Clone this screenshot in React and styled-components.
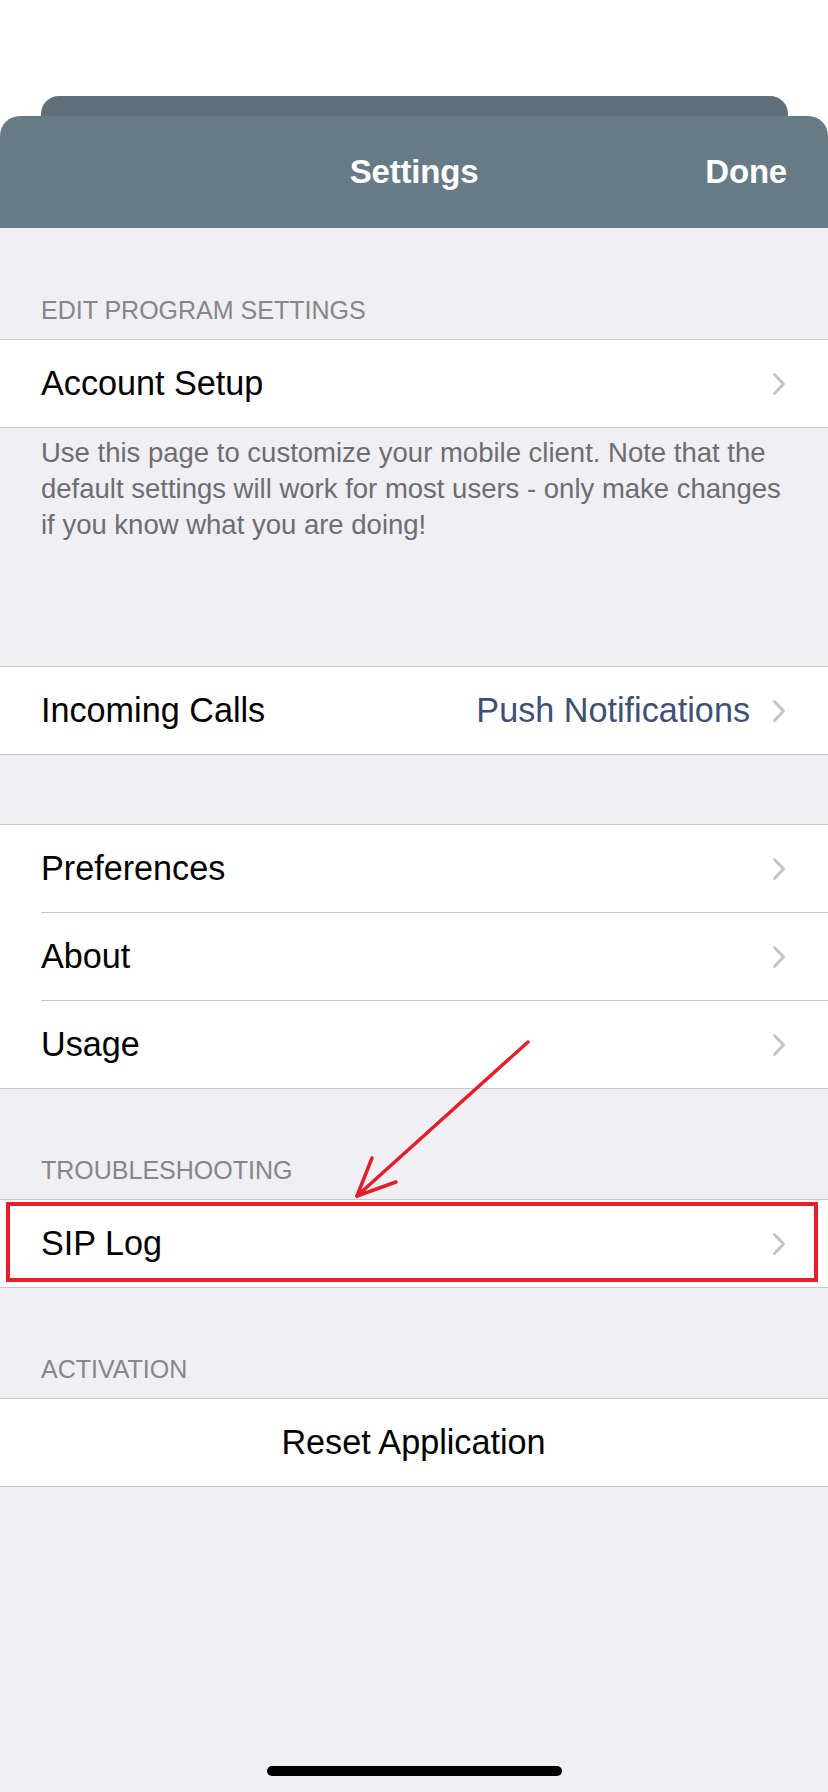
import React from "react";
import styled, { createGlobalStyle } from "styled-components";

const GlobalStyle = createGlobalStyle`
  html, body {
    margin: 0;
    padding: 0;
    background: #ffffff;
  }
  body {
    font-family: "Liberation Sans", Arial, sans-serif;
    -webkit-font-smoothing: antialiased;
  }
  * { box-sizing: border-box; }
`;

const Screen = styled.div`
  position: relative;
  width: 828px;
  min-height: 1792px;
  padding-top: 96px;
  display: flex;
  flex-direction: column;
  background: #ffffff;
  overflow: hidden;
`;

const BackCard = styled.div`
  height: 20px;
  margin: 0 40px 0 41px;
  background: #5e6e7a;
  border-radius: 18px 18px 0 0;
`;

const Sheet = styled.div`
  position: relative;
  flex: 1;
  display: flex;
  flex-direction: column;
  background: #efeff4;
  border-radius: 20px 20px 0 0;
  overflow: hidden;
`;

const NavBar = styled.header`
  height: 112px;
  display: grid;
  grid-template-columns: 1fr auto 1fr;
  align-items: center;
  padding: 0 41px;
  background: #677b87;
  color: #ffffff;
`;

const Title = styled.h1`
  margin: 0;
  grid-column: 2;
  font-size: 33px;
  font-weight: 700;
  letter-spacing: -0.2px;
`;

const DoneButton = styled.span`
  grid-column: 3;
  justify-self: end;
  font-size: 33px;
  font-weight: 700;
  letter-spacing: -0.2px;
`;

const SectionHeader = styled.div`
  margin-top: ${(p) => p.$gap}px;
  padding: 0 41px 14px;
  font-size: 25px;
  line-height: 30px;
  color: #86868b;
  text-transform: uppercase;
`;

const Group = styled.div`
  margin-top: ${(p) => p.$gap || 0}px;
  background: #ffffff;
  border-top: 1px solid #c8c7cc;
  border-bottom: 1px solid #c8c7cc;
`;

const Row = styled.div`
  position: relative;
  height: 87px;
  display: flex;
  align-items: center;
  justify-content: ${(p) => (p.$center ? "center" : "flex-start")};
  padding: 0 42px 0 41px;
  font-size: 34.2px;
  color: #000000;
`;

const Divider = styled.div`
  height: 1px;
  margin-left: 41px;
  background: #c8c7cc;
`;

const Label = styled.span`
  flex: ${(p) => (p.$center ? "0 0 auto" : "1")};
`;

const Value = styled.span`
  margin-right: 22px;
  color: #3f4f75;
`;

const Footer = styled.p`
  margin: 0;
  padding: 7px 42px 0 41px;
  font-size: 27.5px;
  line-height: 36px;
  color: #6d6d72;
`;

const Highlight = styled.div`
  position: absolute;
  top: 2px;
  bottom: 5px;
  left: 6px;
  right: 10px;
  border: 4px solid #e3202a;
  pointer-events: none;
`;

const ArrowMark = styled.svg`
  position: absolute;
  left: 340px;
  top: 1030px;
  width: 200px;
  height: 180px;
  pointer-events: none;
`;

const HomeIndicator = styled.div`
  position: absolute;
  left: 267px;
  bottom: 16px;
  width: 295px;
  height: 10px;
  border-radius: 5px;
  background: #000000;
`;

const Chevron = () => (
  <svg width="14" height="24" viewBox="0 0 14 24" aria-hidden="true">
    <polyline
      points="2.5,2.5 11.5,12 2.5,21.5"
      fill="none"
      stroke="#c4c4c7"
      strokeWidth="3"
      strokeLinecap="round"
      strokeLinejoin="round"
    />
  </svg>
);

const NavRow = ({ label, value, children }) => (
  <Row>
    <Label>{label}</Label>
    {value && <Value>{value}</Value>}
    <Chevron />
    {children}
  </Row>
);

export default function App() {
  return (
    <>
      <GlobalStyle />
      <Screen>
        <BackCard />
        <Sheet>
          <NavBar>
            <Title>Settings</Title>
            <DoneButton>Done</DoneButton>
          </NavBar>

          <SectionHeader $gap={67}>Edit Program Settings</SectionHeader>
          <Group>
            <NavRow label="Account Setup" />
          </Group>
          <Footer>
            Use this page to customize your mobile client. Note that the default
            settings will work for most users - only make changes if you know
            what you are doing!
          </Footer>

          <Group $gap={123}>
            <NavRow label="Incoming Calls" value="Push Notifications" />
          </Group>

          <Group $gap={69}>
            <NavRow label="Preferences" />
            <Divider />
            <NavRow label="About" />
            <Divider />
            <NavRow label="Usage" />
          </Group>

          <SectionHeader $gap={66}>Troubleshooting</SectionHeader>
          <Group>
            <NavRow label="SIP Log">
              <Highlight />
            </NavRow>
          </Group>

          <SectionHeader $gap={66}>Activation</SectionHeader>
          <Group>
            <Row $center>
              <Label $center>Reset Application</Label>
            </Row>
          </Group>

          <HomeIndicator />
        </Sheet>

        <ArrowMark viewBox="0 0 200 180" aria-hidden="true">
          <g
            fill="none"
            stroke="#e3202a"
            strokeWidth="3.5"
            strokeLinecap="round"
            strokeLinejoin="round"
          >
            <line x1="188" y1="12" x2="17" y2="166" />
            <line x1="17" y1="166" x2="32" y2="128" />
            <line x1="17" y1="166" x2="56" y2="152" />
          </g>
        </ArrowMark>
      </Screen>
    </>
  );
}
